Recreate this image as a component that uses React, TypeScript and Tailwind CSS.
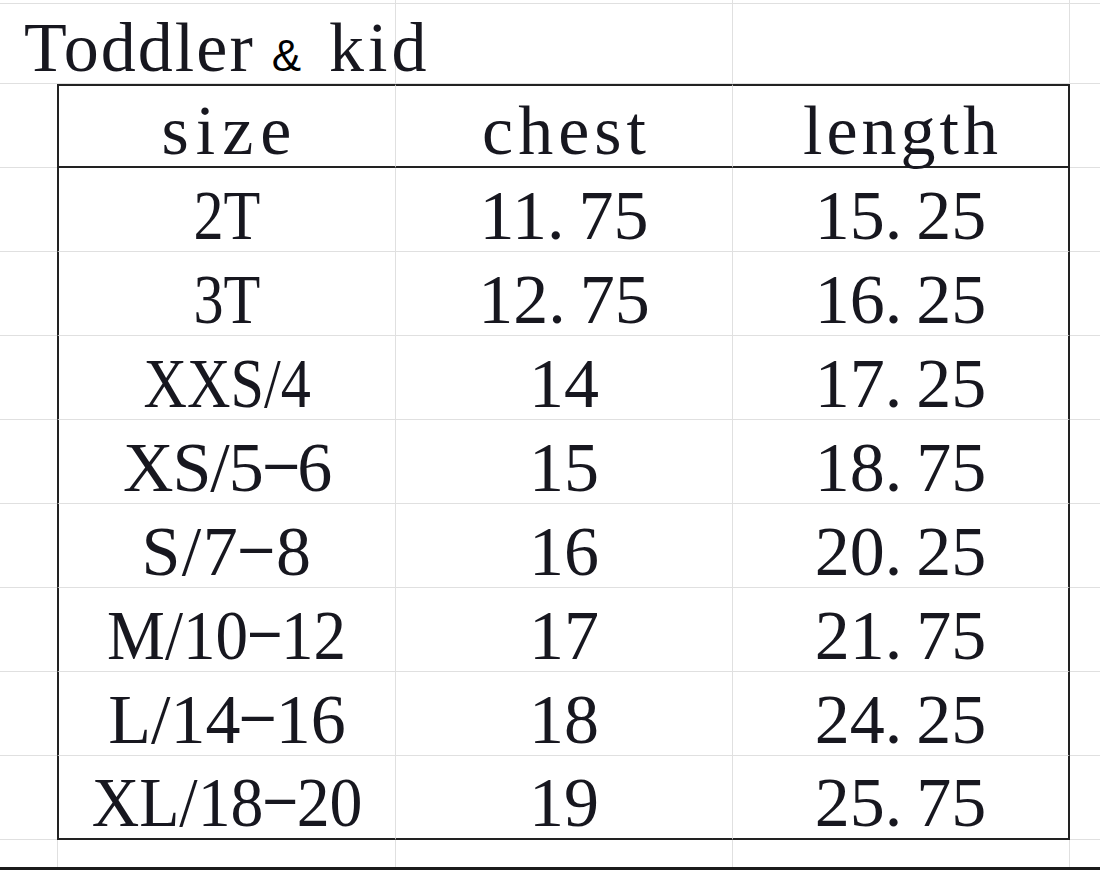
import React from "react";

type Cell = { t: string; cls?: string };

const rows: Cell[][] = [
  [{ t: "2T", cls: "scale-x-[0.86]" }, { t: "11.75" }, { t: "15.25" }],
  [{ t: "3T", cls: "scale-x-[0.86]" }, { t: "12.75" }, { t: "16.25" }],
  [{ t: "XXS/4", cls: "scale-x-[0.86]" }, { t: "14" }, { t: "17.25" }],
  [{ t: "XS/5-6", cls: "tracking-[-1px]" }, { t: "15" }, { t: "18.75" }],
  [{ t: "S/7-8", cls: "tracking-[1.5px]" }, { t: "16" }, { t: "20.25" }],
  [{ t: "M/10-12", cls: "scale-x-[0.93]" }, { t: "17" }, { t: "21.75" }],
  [{ t: "L/14-16" }, { t: "18" }, { t: "24.25" }],
  [{ t: "XL/18-20", cls: "scale-x-[0.94]" }, { t: "19" }, { t: "25.75" }],
];

function Txt({ s }: { s: string }) {
  const parts = s.split(/([.\-])/);
  return (
    <>
      {parts.map((p, i) => {
        if (p === ".")
          return (
            <span key={i} className="tracking-[14px]">
              .
            </span>
          );
        if (p === "-")
          return (
            <span
              key={i}
              className="inline-block mx-[6px] scale-x-[1.75] scale-y-[0.8] -translate-y-[6px]"
            >
              -
            </span>
          );
        return p ? <span key={i}>{p}</span> : null;
      })}
    </>
  );
}

function CellText({ c }: { c: Cell }) {
  return (
    <span
      className={
        "inline-block whitespace-nowrap leading-[70px] text-[70px] " +
        (c.cls ?? "")
      }
    >
      <Txt s={c.t} />
    </span>
  );
}

export default function App() {
  return (
    <div className="w-[1100px] h-[870px] bg-white overflow-hidden flex flex-col font-['Liberation_Serif',serif] text-[#17171f]">
      {/* top strip */}
      <div className="flex h-[4px] shrink-0">
        <div className="w-[396px] shrink-0 border-r border-r-[#e0e0e0] border-b border-b-[#e0e0e0]" />
        <div className="w-[337px] shrink-0 border-r border-r-[#e0e0e0] border-b border-b-[#e0e0e0]" />
        <div className="w-[337px] shrink-0 border-r border-r-[#e0e0e0] border-b border-b-[#e0e0e0]" />
        <div className="flex-1 border-b border-b-[#e0e0e0]" />
      </div>

      {/* title row */}
      <div className="flex h-[80px] shrink-0">
        <div className="w-[396px] shrink-0 border-r border-r-[#e0e0e0] border-b border-b-[#e0e0e0] flex items-end relative">
          <div className="relative z-10 whitespace-nowrap leading-[70px] text-[70px] pl-[24px]">
            <span className="tracking-[2px]">Toddler</span>
            <span className="inline-block ml-[17px] leading-none text-[44px] font-['Liberation_Sans',sans-serif] text-black">
              &amp;
            </span>
            <span className="ml-[28px] tracking-[4px]">kid</span>
          </div>
        </div>
        <div className="w-[337px] shrink-0 border-r border-r-[#e0e0e0] border-b border-b-[#e0e0e0]" />
        <div className="w-[337px] shrink-0 border-r border-r-[#e0e0e0] border-b border-b-[#e0e0e0]" />
        <div className="flex-1 border-b border-b-[#e0e0e0]" />
      </div>

      {/* header row */}
      <div className="flex h-[84px] shrink-0">
        <div className="w-[57px] shrink-0 border-b border-b-[#e0e0e0]" />
        <div className="w-[339px] shrink-0 border-l-2 border-l-[#222222] border-t-2 border-t-[#222222] border-b-2 border-b-[#222222] border-r border-r-[#e0e0e0] flex items-end justify-center">
          <span className="inline-block leading-[70px] text-[70px] tracking-[7px] pl-[6px]">
            size
          </span>
        </div>
        <div className="w-[337px] shrink-0 border-t-2 border-t-[#222222] border-b-2 border-b-[#222222] border-r border-r-[#e0e0e0] flex items-end justify-center">
          <span className="inline-block leading-[70px] text-[70px] tracking-[5px] pl-[5px]">
            chest
          </span>
        </div>
        <div className="w-[337px] shrink-0 border-t-2 border-t-[#222222] border-b-2 border-b-[#222222] border-r-2 border-r-[#222222] flex items-end justify-center">
          <span className="inline-block leading-[70px] text-[70px] tracking-[4px] pl-[4px]">
            length
          </span>
        </div>
        <div className="flex-1 border-b border-b-[#e0e0e0]" />
      </div>

      {/* data rows */}
      {rows.map((r, i) => {
        const last = i === rows.length - 1;
        const bottom = last
          ? "border-b-2 border-b-[#222222]"
          : "border-b border-b-[#e0e0e0]";
        return (
          <div key={i} className="flex h-[84px] shrink-0">
            <div className="w-[57px] shrink-0 border-b border-b-[#e0e0e0]" />
            <div
              className={
                "w-[339px] shrink-0 border-l-2 border-l-[#222222] border-r border-r-[#e0e0e0] flex items-end justify-center " +
                bottom
              }
            >
              <CellText c={r[0]} />
            </div>
            <div
              className={
                "w-[337px] shrink-0 border-r border-r-[#e0e0e0] flex items-end justify-center " +
                bottom
              }
            >
              <CellText c={r[1]} />
            </div>
            <div
              className={
                "w-[337px] shrink-0 border-r-2 border-r-[#222222] flex items-end justify-center " +
                bottom
              }
            >
              <CellText c={r[2]} />
            </div>
            <div className="flex-1 border-b border-b-[#e0e0e0]" />
          </div>
        );
      })}

      {/* bottom row */}
      <div className="flex flex-1">
        <div className="w-[57px] shrink-0" />
        <div className="w-[339px] shrink-0 border-l border-l-[#e0e0e0] border-r border-r-[#e0e0e0]" />
        <div className="w-[337px] shrink-0 border-r border-r-[#e0e0e0]" />
        <div className="w-[337px] shrink-0 border-r border-r-[#e0e0e0]" />
        <div className="flex-1" />
      </div>
      <div className="h-[3px] shrink-0 bg-[#1b1b1b]" />
    </div>
  );
}
